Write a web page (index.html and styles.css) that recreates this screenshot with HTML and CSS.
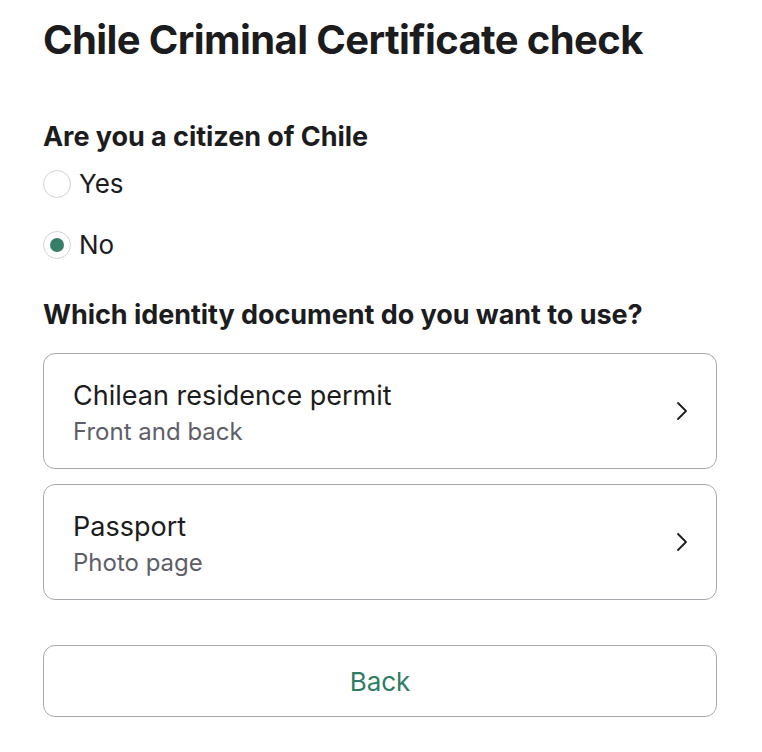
FILE: index.html
```html
<!DOCTYPE html>
<html lang="en">

<head>
    <meta charset="UTF-8">
    <meta name="viewport" content="width=device-width, initial-scale=1.0">
    <title>Chile Criminal Certificate check</title>
    <link rel="stylesheet" href="styles.css">
</head>

<body>
    <div class="page">
        <h1 class="page__title">Chile Criminal Certificate check</h1>

        <div class="question">
            <h2 class="question__title">Are you a citizen of Chile</h2>
            <label class="radio">
                <span class="radio__circle"></span>
                <span class="radio__label">Yes</span>
            </label>
            <label class="radio radio--checked">
                <span class="radio__circle"></span>
                <span class="radio__label">No</span>
            </label>
        </div>

        <div class="question question--docs">
            <h2 class="question__title">Which identity document do you want to use?</h2>
            <div class="options">
                <a class="option" href="#">
                    <div class="option__text">
                        <div class="option__name">Chilean residence permit</div>
                        <div class="option__hint">Front and back</div>
                    </div>
                    <svg class="option__arrow" width="12" height="20" viewBox="0 0 12 20">
                        <path d="M2 2 L10 10 L2 18" fill="none" stroke="#1c1c1e" stroke-width="1.8" stroke-linecap="round" stroke-linejoin="round"/>
                    </svg>
                </a>
                <a class="option" href="#">
                    <div class="option__text">
                        <div class="option__name">Passport</div>
                        <div class="option__hint">Photo page</div>
                    </div>
                    <svg class="option__arrow" width="12" height="20" viewBox="0 0 12 20">
                        <path d="M2 2 L10 10 L2 18" fill="none" stroke="#1c1c1e" stroke-width="1.8" stroke-linecap="round" stroke-linejoin="round"/>
                    </svg>
                </a>
            </div>
        </div>

        <button class="back" type="button">Back</button>
    </div>
</body>

</html>
```

FILE: styles.css
```css
*,
*::after,
*::before {
    padding: 0;
    margin: 0;
    box-sizing: border-box;
}

body {
    background: #fff;
    color: #1c1c1e;
    font-family: Inter, "Liberation Sans", sans-serif;
}

.page {
    width: 674px;
    margin-left: 43px;
    padding-top: 16px;
}

.page__title {
    font-size: 40px;
    line-height: 48px;
    font-weight: 700;
    letter-spacing: -0.6px;
}

.question {
    margin-top: 57px;
}

.question--docs {
    margin-top: 40px;
}

.question__title {
    font-size: 27px;
    line-height: 32px;
    font-weight: 700;
    letter-spacing: -0.05px;
}

.radio {
    display: flex;
    align-items: center;
    gap: 8px;
    height: 28px;
    margin-top: 17px;
    cursor: pointer;
}

.radio + .radio {
    margin-top: 33px;
}

.radio__circle {
    width: 28px;
    height: 28px;
    border: 1px solid #d2d2d6;
    border-radius: 50%;
    display: flex;
    align-items: center;
    justify-content: center;
}

.radio--checked .radio__circle::after {
    content: "";
    width: 14px;
    height: 14px;
    border-radius: 50%;
    background: #367e67;
}

.radio__label {
    font-size: 26px;
    line-height: 28px;
}

.options {
    display: flex;
    flex-direction: column;
    gap: 15px;
    margin-top: 22px;
}

.option {
    display: flex;
    align-items: center;
    justify-content: space-between;
    height: 116px;
    padding: 0 28px 0 29px;
    border: 1px solid #a9a9b0;
    border-radius: 12px;
    color: inherit;
    text-decoration: none;
}

.option__text {
    align-self: flex-start;
    padding-top: 25px;
}

.option__name {
    font-size: 27px;
    line-height: 34px;
}

.option__hint {
    margin-top: 2px;
    font-size: 24px;
    line-height: 34px;
    color: #5e5e68;
}

.back {
    display: block;
    width: 100%;
    height: 72px;
    margin-top: 45px;
    border: 1px solid #a9a9b0;
    border-radius: 12px;
    background: #fff;
    color: #2f7d62;
    font-family: inherit;
    font-size: 26px;
}
```
